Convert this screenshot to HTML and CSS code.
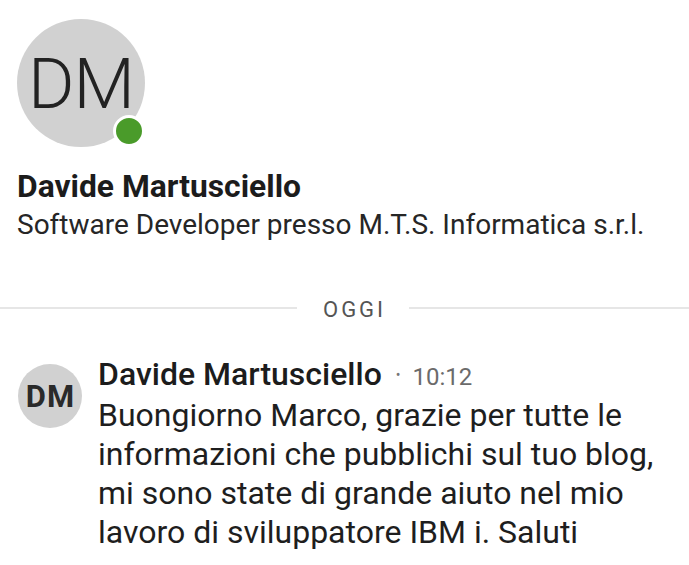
FILE: index.html
```html
<!DOCTYPE html>
<html lang="it">
<head>
<meta charset="utf-8">
<link rel="stylesheet" href="styles.css">
</head>
<body>
<div class="profile">
  <div class="avatar-wrap">
    <div class="avatar-lg">DM</div>
    <span class="presence"></span>
  </div>
  <div class="p-name">Davide Martusciello</div>
  <div class="p-title">Software Developer presso M.T.S. Informatica s.r.l.</div>
</div>
<div class="divider"><span class="line line-left"></span><span class="day">OGGI</span><span class="line"></span></div>
<div class="message">
  <div class="avatar-sm">DM</div>
  <div class="msg-body">
    <div class="msg-head"><span class="m-name">Davide Martusciello</span><span class="sep">•</span><span class="time">10:12</span></div>
    <div class="msg-text">Buongiorno Marco, grazie per tutte le informazioni che pubblichi sul tuo blog, mi sono state di grande aiuto nel mio lavoro di sviluppatore IBM i. Saluti</div>
  </div>
</div>
</body>
</html>
```
FILE: styles.css
```css
html, body { margin: 0; padding: 0; background: #fff; }
body { font-family: Roboto, "Noto Sans", sans-serif; color: #1e1e1e; width: 689px; overflow: hidden; }
.profile { padding: 19px 0 0 17px; }
.avatar-wrap { position: relative; width: 128px; height: 128px; }
.avatar-lg {
  width: 128px; height: 128px; border-radius: 50%; background: #d1d1d1;
  display: flex; align-items: center; justify-content: center;
  font-size: 71px; font-weight: 300; color: #222; letter-spacing: -1px;
}
.presence {
  position: absolute; left: 96px; top: 96px; width: 26px; height: 26px;
  border-radius: 50%; background: #4a9b2a; border: 3px solid #fff;
}
.p-name { margin-top: 21px; font-size: 31.8px; font-weight: 700; line-height: 36px; color: #1c1c1c; }
.p-title { margin-top: 4px; font-size: 28px; line-height: 34px; color: #262626; }
.divider { display: flex; align-items: center; margin-top: 51px; height: 30px; }
.line { flex: 1; height: 2px; background: #e6e6e6; }
.line-left { flex: none; width: 297px; }
.day { flex: none; width: 112px; box-sizing: border-box; padding-left: 26px; font-size: 22px; letter-spacing: 3px; font-weight: 400; color: #555; margin-top: 3px; }
.message { display: flex; gap: 16px; padding: 32px 0 0 18px; }
.avatar-sm {
  flex: none; width: 64px; height: 64px; margin-top: 9px; border-radius: 50%; background: #d1d1d1;
  display: flex; align-items: center; justify-content: center;
  font-size: 31px; font-weight: 700; color: #2a2a2a; letter-spacing: 1px; text-indent: 1px;
}
.msg-body { flex: 1; padding-right: 30px; }
.msg-head { display: flex; align-items: baseline; line-height: 38px; }
.m-name { font-size: 32px; font-weight: 500; color: #1c1c1c; }
.sep { font-size: 14px; color: #777; margin: 0 12px 0 14px; position: relative; top: -5px; }
.time { font-size: 24px; color: #6b6b6b; }
.msg-text { margin-top: -3px; font-size: 32px; line-height: 39px; color: #1e1e1e; }
```
